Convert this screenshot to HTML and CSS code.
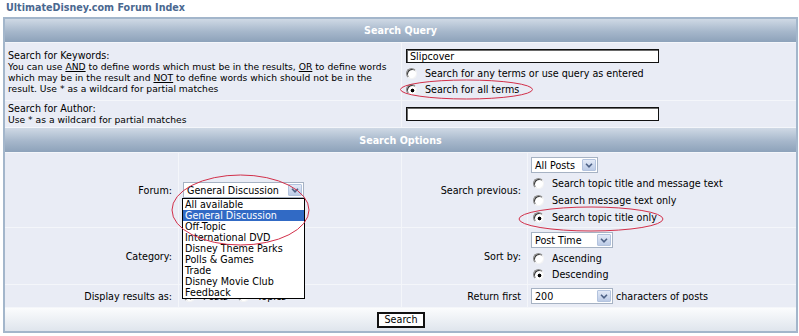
FILE: index.html
```html
<!DOCTYPE html>
<html lang="en">
<head>
<meta charset="utf-8">
<title>Search</title>
<link rel="stylesheet" href="styles.css">
</head>
<body>
<div class="crumb">UltimateDisney.com Forum Index</div>
<div class="box">
  <div class="hdr">Search Query</div>
  <div class="two">
    <div class="cell txtcell">
      <div class="lbl">Search for Keywords:</div>
      <div class="small">You can use <u>AND</u> to define words which must be in the results, <u>OR</u> to define words<br>which may be in the result and <u>NOT</u> to define words which should not be in the<br>result. Use * as a wildcard for partial matches</div>
    </div>
    <div class="cell valcell kwval">
      <input class="txt kwinput" type="text" value="Slipcover" aria-label="Keywords">
      <label class="opt"><input class="rad" type="radio" name="terms">Search for any terms or use query as entered</label>
      <label class="opt"><input class="rad" type="radio" name="terms" checked>Search for all terms</label>
    </div>
  </div>
  <div class="two">
    <div class="cell txtcell">
      <div class="lbl">Search for Author:</div>
      <div class="small">Use * as a wildcard for partial matches</div>
    </div>
    <div class="cell valcell">
      <input class="txt" type="text" value="" aria-label="Author">
    </div>
  </div>
  <div class="hdr">Search Options</div>
  <div class="four">
    <div class="cell lab">Forum:</div>
    <div class="cell leftval">
      <div class="selwrap">
        <div class="sel w-forum"><span class="selt">General Discussion</span><span class="arr"><svg width="8" height="5" viewBox="0 0 8 5"><path d="M1 0.8 L4 3.8 L7 0.8" fill="none" stroke="#4d6185" stroke-width="1.6"/></svg></span></div>
        <div class="list">
          <div class="it">All available</div>
          <div class="it on">General Discussion</div>
          <div class="it">Off-Topic</div>
          <div class="it">International DVD</div>
          <div class="it">Disney Theme Parks</div>
          <div class="it">Polls &amp; Games</div>
          <div class="it">Trade</div>
          <div class="it">Disney Movie Club</div>
          <div class="it">Feedback</div>
        </div>
      </div>
    </div>
    <div class="cell lab">Search previous:</div>
    <div class="cell rightval prevval">
      <div class="sel w-posts"><span class="selt">All Posts</span><span class="arr"><svg width="8" height="5" viewBox="0 0 8 5"><path d="M1 0.8 L4 3.8 L7 0.8" fill="none" stroke="#4d6185" stroke-width="1.6"/></svg></span></div>
      <label class="opt o17"><input class="rad" type="radio" name="prev">Search topic title and message text</label>
      <label class="opt o17"><input class="rad" type="radio" name="prev">Search message text only</label>
      <label class="opt o17"><input class="rad" type="radio" name="prev" checked>Search topic title only</label>
    </div>
  </div>
  <div class="four">
    <div class="cell lab">Category:</div>
    <div class="cell leftval"></div>
    <div class="cell lab">Sort by:</div>
    <div class="cell rightval sortval">
      <div class="sel w-time"><span class="selt">Post Time</span><span class="arr"><svg width="8" height="5" viewBox="0 0 8 5"><path d="M1 0.8 L4 3.8 L7 0.8" fill="none" stroke="#4d6185" stroke-width="1.6"/></svg></span></div>
      <label class="opt"><input class="rad" type="radio" name="sort">Ascending</label>
      <label class="opt"><input class="rad" type="radio" name="sort" checked>Descending</label>
    </div>
  </div>
  <div class="four">
    <div class="cell lab">Display results as:</div>
    <div class="cell leftval rowval">
      <label class="opt"><input class="rad" type="radio" name="disp" checked>Posts</label>
      <label class="opt"><input class="rad" type="radio" name="disp">Topics</label>
    </div>
    <div class="cell lab">Return first</div>
    <div class="cell rightval rowval">
      <div class="sel w-time"><span class="selt">200</span><span class="arr"><svg width="8" height="5" viewBox="0 0 8 5"><path d="M1 0.8 L4 3.8 L7 0.8" fill="none" stroke="#4d6185" stroke-width="1.6"/></svg></span></div>
      <span class="after">characters of posts</span>
    </div>
  </div>
  <div class="foot"><button class="btn" type="button">Search</button></div>
</div>
<svg class="marks" width="799" height="336" viewBox="0 0 799 336" aria-hidden="true">
  <ellipse cx="466.5" cy="89.5" rx="66" ry="9.5" fill="none" stroke="#d2304a" stroke-width="1"/>
  <ellipse cx="240.5" cy="210" rx="68.5" ry="35" fill="none" stroke="#d2304a" stroke-width="1"/>
  <ellipse cx="591" cy="219" rx="72" ry="12" fill="none" stroke="#d2304a" stroke-width="1"/>
</svg>
</body>
</html>
```
FILE: styles.css
```css
* { box-sizing: border-box; }
html, body { margin: 0; padding: 0; background: #fff; }
body {
  font-family: "DejaVu Sans", Verdana, sans-serif;
  font-size: 9.6px;
  color: #000;
  width: 799px;
  height: 336px;
  overflow: hidden;
  position: relative;
}
.crumb {
  height: 17px;
  padding: 2px 0 0 6px;
  font-weight: bold;
  color: #4a6890;
  line-height: 12px;
}
.box {
  margin-left: 3px;
  width: 795px;
  border: 2px solid #a3b6cb;
  display: grid;
  grid-template-rows: 23px 57px 26px 24px 74px 56px 22px 23px;
  row-gap: 1px;
  background: #f4f6fa;
}
.hdr {
  background: linear-gradient(#cfd9e5, #a6b7cb 55%, #8da2ba);
  color: #fff;
  font-weight: bold;
  display: flex;
  align-items: center;
  justify-content: center;
}
.two { display: grid; grid-template-columns: 396px 394px; column-gap: 1px; }
.four { display: grid; grid-template-columns: 173px 222px 125px 268px; column-gap: 1px; }
.cell {
  background: #e9ecf5;
  display: flex;
  flex-direction: column;
  justify-content: center;
  min-width: 0;
}
.txtcell { padding-left: 3px; line-height: 11px; }
.small { font-size: 9.2px; line-height: 11px; }
.lbl { line-height: 11px; }
.valcell { padding-left: 4px; }
.kwval { justify-content: flex-start; padding-top: 6px; }
.txt {
  width: 253px;
  height: 14px;
  border: 1px solid #111;
  box-shadow: inset 1px 1px 0 #6a6a6a;
  background: #fff;
  font: 9.6px "DejaVu Sans", Verdana, sans-serif;
  padding: 0 3px;
  margin: 0;
  color: #000;
}
.kwinput { margin-bottom: 2px; }
.opt {
  display: flex;
  align-items: center;
  height: 16px;
  white-space: nowrap;
}
.o17 { height: 17px; }
.rad {
  -webkit-appearance: none;
  appearance: none;
  width: 11px;
  height: 11px;
  margin: 0 8px 0 0;
  border-radius: 50%;
  border: 1px solid;
  border-color: #8c8c8c #f4f4f4 #f4f4f4 #8c8c8c;
  box-shadow: inset 1px 1px 0 #3c3c3c;
  background: #fff;
  flex: none;
}
.rad:checked {
  background: radial-gradient(circle at 5.5px 5.5px, #000 0 1.6px, #fff 2.2px);
}
.lab {
  align-items: flex-end;
  padding-right: 6px;
  white-space: nowrap;
}
.leftval { padding-left: 4px; }
.rightval { padding-left: 3px; }
.rightval .opt { margin-left: 2px; }
.prevval { justify-content: flex-start; padding-top: 4px; }
.prevval .sel { margin-bottom: 2px; }
.sortval { justify-content: flex-start; padding-top: 4px; }
.sortval .sel { margin-bottom: 2px; }
.rowval { flex-direction: row; align-items: center; justify-content: flex-start; }
.leftval.rowval { padding-left: 5px; }
.leftval.rowval .opt { margin-right: 10px; }
.selwrap { position: relative; width: 121px; }
.sel {
  height: 16px;
  background: #fff;
  border: 1px solid #a6b2c3;
  display: flex;
  align-items: center;
  justify-content: space-between;
  padding: 0 1px 0 3px;
  flex: none;
}
.selt { white-space: nowrap; }
.arr {
  width: 14px;
  height: 12px;
  background: linear-gradient(#e3eaf7, #bccbe6);
  border: 1px solid #b3c3de;
  border-radius: 1px;
  display: flex;
  align-items: center;
  justify-content: center;
}
.w-forum { width: 121px; }
.w-posts { width: 67px; }
.w-time { width: 82px; }
.after { margin-left: 3px; white-space: nowrap; }
.list {
  position: absolute;
  left: -1px;
  top: 16px;
  width: 123px;
  background: #fff;
  border: 1px solid #000;
  z-index: 5;
}
.it {
  height: 11px;
  line-height: 11px;
  padding-left: 2px;
  white-space: nowrap;
}
.it.on { background: #316ac5; color: #fff; }
.foot {
  background: linear-gradient(#fbfcfd, #dfe5ed);
  display: flex;
  align-items: center;
  justify-content: center;
}
.btn {
  width: 48px;
  height: 16px;
  border: 2px solid #111;
  background: #fff;
  font: 9.6px "DejaVu Sans", Verdana, sans-serif;
  color: #000;
  padding: 0;
  margin: 0 0 0 1px;
  border-radius: 0;
}
.marks {
  position: absolute;
  left: 0;
  top: 0;
  pointer-events: none;
  z-index: 10;
}
```
